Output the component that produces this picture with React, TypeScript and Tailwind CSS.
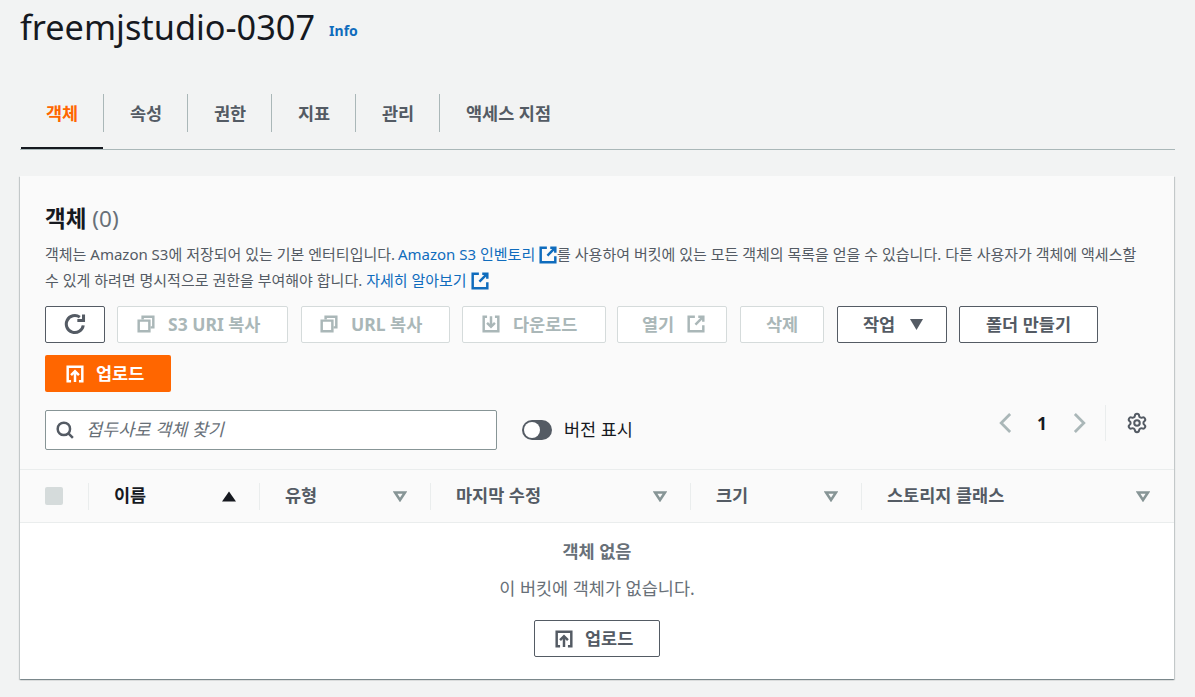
import { Settings } from "lucide-react";
import type { ReactNode } from "react";

const FONT = "[font-family:'Noto_Sans','Noto_Sans_CJK_KR',sans-serif]";

const Svg = ({ className, children }: { className?: string; children: ReactNode }) => (
  <svg
    viewBox="0 0 16 16"
    fill="none"
    stroke="currentColor"
    strokeWidth="2.2"
    className={`shrink-0 ${className ?? "w-[18px] h-[18px]"}`}
  >
    {children}
  </svg>
);

const RefreshIcon = () => (
  <Svg className="w-[22px] h-[22px]">
    <path d="M14 9A6.2 6.2 0 1 1 11.5 3" />
    <path d="M14.2 1v4.5H9.7" />
  </Svg>
);

const CopyIcon = () => (
  <Svg>
    <path d="M5 4V1.5h9.5V11H12" />
    <path d="M1.5 5h9.5v9.5H1.5z" />
  </Svg>
);

const DownloadIcon = () => (
  <Svg>
    <path d="M4.5 1.5H1.5v13h13v-13h-3" />
    <path d="M8 1v9M4.5 7 8 10.5 11.5 7" />
  </Svg>
);

const ExternalIcon = ({ className }: { className?: string }) => (
  <Svg className={className}>
    <path d="M14.5 9v5.5h-13v-13H7" />
    <path d="M10 1.5h4.5V6M14.5 1.5 7.5 8.5" />
  </Svg>
);

const UploadIcon = () => (
  <Svg>
    <path d="M4.5 14.5h-3v-13h13v13h-3" />
    <path d="M8 15V6M4.5 9 8 5.5 11.5 9" />
  </Svg>
);

const SearchIcon = () => (
  <Svg>
    <circle cx="7" cy="7" r="5.5" />
    <path d="M11 11l4 4" />
  </Svg>
);

const SortDown = ({ filled }: { filled?: boolean }) => (
  <svg viewBox="0 0 14 11" className={`w-[14px] h-[11px] ${filled ? "text-[#16191f]" : "text-[#879596]"}`}>
    {filled ? (
      <path d="M7 0.5 14 10.5H0z" fill="currentColor" />
    ) : (
      <path d="M2 1.5h10L7 9z" fill="none" stroke="currentColor" strokeWidth="2.6" />
    )}
  </svg>
);

const TabItem = ({ label, active, last }: { label: string; active?: boolean; last?: boolean }) => (
  <div className={`w-[84px] h-[60px] flex flex-col ${last ? "w-auto pl-[26px]" : ""}`}>
    <div
      className={`mt-[5px] h-[38px] flex items-center whitespace-nowrap ${
        last ? "" : "justify-center pl-[1px] border-r border-[#aab7b8]"
      } ${active ? "text-[#ff6600]" : "text-[#545b64]"} text-[17.5px] font-bold`}
    >
      {label}
    </div>
    {active && <div className="mt-auto mx-px h-[2px] bg-[#16191f]" />}
  </div>
);

const ToolButton = ({
  width,
  disabled,
  children,
}: {
  width: string;
  disabled?: boolean;
  children: ReactNode;
}) => (
  <button
    className={`${width} h-[37px] pb-px rounded-[2px] border flex items-center gap-[13px] text-[17.5px] font-bold bg-white ${
      disabled ? "border-[#d5dbdb] text-[#aab7b8]" : "border-[#545b64] text-[#545b64]"
    }`}
  >
    {children}
  </button>
);

const HeaderCell = ({
  label,
  width,
  sorted,
  first,
}: {
  label: string;
  width: string;
  sorted?: boolean;
  first?: boolean;
}) => (
  <div
    className={`${width} h-[27px] pl-[25px] pr-[23px] flex items-center justify-between border-l border-[#eaeded] text-[17.5px] font-bold ${
      first ? "text-[#16191f] pl-6" : "text-[#545b64]"
    }`}
  >
    <span className="-mt-[2px]">{label}</span>
    <SortDown filled={sorted} />
  </div>
);

export default function App() {
  return (
    <div className={`${FONT} w-[1195px] h-[697px] overflow-hidden bg-[#f2f3f3] px-5`}>
      <div className="h-[56px] flex items-center gap-[14px] -mt-[1px]">
        <h1 className="text-[34.3px] leading-[56px] text-[#16191f]">freemjstudio-0307</h1>
        <a className="text-sm font-bold text-[#0f6cbd] mt-2">Info</a>
      </div>

      <div className="mt-[34px] h-[61px] flex border-b border-[#aab7b8]">
        <TabItem label="객체" active />
        <TabItem label="속성" />
        <TabItem label="권한" />
        <TabItem label="지표" />
        <TabItem label="관리" />
        <TabItem label="액세스 지점" last />
      </div>

      <section className="mt-[26px] w-[1154px] h-[503px] bg-white shadow-[0_1px_1px_0_rgba(0,28,36,0.3),1px_1px_1px_0_rgba(0,28,36,0.15),-1px_1px_1px_0_rgba(0,28,36,0.15)] flex flex-col">
        <div className="bg-[#fafafa] h-[294px] border-b border-[#eaeded] px-[25px] pt-[29px]">
          <h2 className="text-[22.5px] leading-[28px] font-bold text-[#16191f]">
            객체 <span className="font-normal text-[#687078]">(0)</span>
          </h2>
          <p className="mt-[8px] text-[15px] leading-[26px] text-[#545b64]">
            객체는 Amazon S3에 저장되어 있는 기본 엔터티입니다.{" "}
            <a className="text-[#0f6cbd] -ml-px">
              Amazon S3 인벤토리 <ExternalIcon className="w-[18px] h-[18px] inline-block align-[-4px]" />
            </a>
            를 사용하여 버킷에 있는 모든 객체의 목록을 얻을 수 있습니다. 다른 사용자가 객체에 액세스할 수 있게 하려면 명시적으로 권한을 부여해야 합니다.{" "}
            <a className="text-[#0f6cbd]">
              자세히 알아보기 <ExternalIcon className="w-[18px] h-[18px] inline-block align-[-4px]" />
            </a>
          </p>

          <div className="mt-[13px] flex flex-wrap gap-x-3 gap-y-3">
            <ToolButton width="w-[60px] justify-center">
              <RefreshIcon />
            </ToolButton>
            <ToolButton width="w-[171px] pl-[19px]" disabled>
              <CopyIcon />
              S3 URI 복사
            </ToolButton>
            <ToolButton width="w-[149px] ml-px pl-[18px]" disabled>
              <CopyIcon />
              URL 복사
            </ToolButton>
            <ToolButton width="w-[144px] pl-[19px]" disabled>
              <DownloadIcon />
              다운로드
            </ToolButton>
            <ToolButton width="w-[110px] -ml-px pl-[24px]" disabled>
              열기
              <ExternalIcon />
            </ToolButton>
            <ToolButton width="w-[84px] ml-px justify-center" disabled>
              삭제
            </ToolButton>
            <ToolButton width="w-[110px] ml-px pl-[25px]">
              작업
              <svg viewBox="0 0 12 10" className="w-[13px] h-[11px] ml-[2px]">
                <path d="M0 0h12L6 10z" fill="currentColor" />
              </svg>
            </ToolButton>
            <ToolButton width="w-[139px] justify-center">폴더 만들기</ToolButton>
            <button className="w-[126px] h-[37px] rounded-[2px] bg-[#ff6600] text-white text-[17.5px] font-bold flex items-center pl-[21px] gap-3">
              <UploadIcon />
              업로드
            </button>
          </div>

          <div className="mt-[18px] flex items-center">
            <div className="w-[452px] h-[40px] pb-px rounded-[2px] border border-[#879596] bg-white flex items-center pl-[10px] gap-[12px] text-[#545b64]">
              <SearchIcon />
              <span className="text-[17.5px] italic text-[#687078]">접두사로 객체 찾기</span>
            </div>
            <div className="ml-[25px] w-[30px] h-5 rounded-full bg-[#545b64] p-[2px] flex">
              <div className="w-4 h-4 rounded-full bg-white" />
            </div>
            <span className="ml-3 -mt-[2px] text-[17.5px] text-[#16191f]">버전 표시</span>
            <div className="ml-auto flex items-center h-[36px] -mt-[14px] text-[#aab7b8]">
              <svg viewBox="0 0 16 16" fill="none" stroke="currentColor" strokeWidth="2" className="w-[22px] h-[22px]">
                <path d="M11 1.5 4.5 8l6.5 6.5" />
              </svg>
              <span className="ml-5 mr-[21px] text-[17.5px] font-bold text-[#16191f]">1</span>
              <svg viewBox="0 0 16 16" fill="none" stroke="currentColor" strokeWidth="2" className="w-[22px] h-[22px]">
                <path d="M5 1.5 11.5 8 5 14.5" />
              </svg>
              <div className="ml-[15px] h-[36px] border-l border-[#eaeded]" />
              <div className="ml-[20px] mr-px text-[#545b64]">
                <Settings size={22} strokeWidth={2.2} />
              </div>
            </div>
          </div>
        </div>

        <div className="bg-[#fafafa] h-[53px] border-b border-[#eaeded] flex items-center">
          <div className="w-[68px] pl-[25px]">
            <div className="w-[18px] h-[18px] rounded-[2px] bg-[#d5dbdb]" />
          </div>
          <HeaderCell label="이름" width="w-[171px]" sorted first />
          <HeaderCell label="유형" width="w-[171px]" />
          <HeaderCell label="마지막 수정" width="w-[260px]" />
          <HeaderCell label="크기" width="w-[171px]" />
          <HeaderCell label="스토리지 클래스" width="w-[312px]" />
        </div>

        <div className="flex-1 bg-white flex flex-col items-center pt-[15px]">
          <p className="text-[17.5px] leading-[26px] font-bold text-[#687078]">객체 없음</p>
          <p className="mt-[11px] text-[17.5px] leading-[26px] text-[#687078]">이 버킷에 객체가 없습니다.</p>
          <button className="mt-[19px] w-[126px] h-[37px] rounded-[2px] border border-[#545b64] text-[#545b64] text-[17.5px] font-bold flex items-center pl-5 gap-3">
            <UploadIcon />
            업로드
          </button>
        </div>
      </section>
    </div>
  );
}
